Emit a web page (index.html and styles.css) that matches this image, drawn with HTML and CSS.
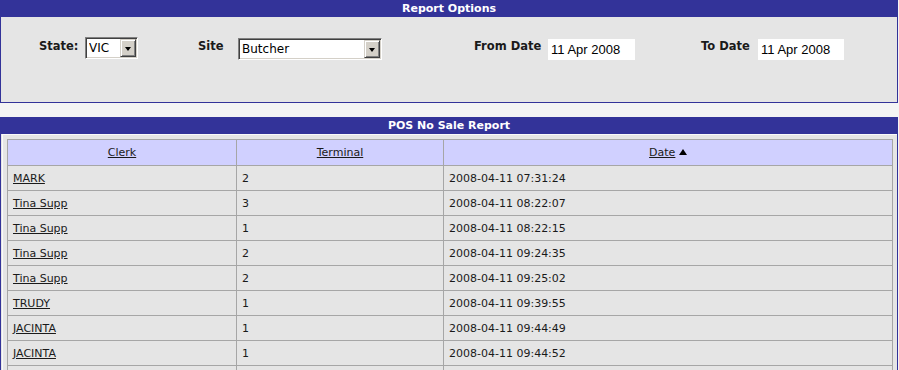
FILE: index.html
```html
<!DOCTYPE html>
<html lang="en">
<head>
  <meta charset="UTF-8" />
  <title>POS No Sale Report</title>
  <link rel="stylesheet" href="styles.css">
</head>
<body>
  <div class="panel">
    <div class="panel-title">Report Options</div>
    <div class="panel-body options">
      <form class="filtros">
        <label class="rotulo" for="state">State:</label>
        <span class="combo combo-state">
          <select id="state"><option>VIC</option><option>NSW</option><option>QLD</option></select>
          <span class="seta"></span>
        </span>
        <label class="rotulo" for="site">Site</label>
        <span class="combo combo-site">
          <select id="site"><option>Butcher</option><option>Bakery</option></select>
          <span class="seta"></span>
        </span>
        <label class="rotulo" for="from">From Date</label>
        <input class="data" id="from" type="text" value="11 Apr 2008">
        <label class="rotulo" for="to">To Date</label>
        <input class="data" id="to" type="text" value="11 Apr 2008">
      </form>
    </div>
  </div>

  <div class="panel">
    <div class="panel-title">POS No Sale Report</div>
    <div class="panel-body">
      <div class="grade">
        <table>
          <thead>
            <tr>
              <th class="col-clerk"><a href="#">Clerk</a></th>
              <th class="col-term"><a href="#">Terminal</a></th>
              <th><a href="#">Date</a> <span class="ordem"></span></th>
            </tr>
          </thead>
          <tbody>
            <tr><td><a href="#">MARK</a></td><td>2</td><td>2008-04-11 07:31:24</td></tr>
            <tr><td><a href="#">Tina Supp</a></td><td>3</td><td>2008-04-11 08:22:07</td></tr>
            <tr><td><a href="#">Tina Supp</a></td><td>1</td><td>2008-04-11 08:22:15</td></tr>
            <tr><td><a href="#">Tina Supp</a></td><td>2</td><td>2008-04-11 09:24:35</td></tr>
            <tr><td><a href="#">Tina Supp</a></td><td>2</td><td>2008-04-11 09:25:02</td></tr>
            <tr><td><a href="#">TRUDY</a></td><td>1</td><td>2008-04-11 09:39:55</td></tr>
            <tr><td><a href="#">JACINTA</a></td><td>1</td><td>2008-04-11 09:44:49</td></tr>
            <tr><td><a href="#">JACINTA</a></td><td>1</td><td>2008-04-11 09:44:52</td></tr>
            <tr><td><a href="#">JACINTA</a></td><td>1</td><td>2008-04-11 09:51:10</td></tr>
          </tbody>
        </table>
      </div>
    </div>
  </div>
</body>
</html>
```

FILE: styles.css
```css
html, body {
  margin: 0;
  background-color: #f4f4f4;
  font-family: "DejaVu Sans", Verdana, Tahoma, sans-serif;
  color: #1a1a1a;
}

body {
  overflow: hidden;
}

.panel {
  margin: 0 1px 14px 0;
}

.panel-title {
  height: 17px;
  line-height: 17px;
  background-color: #333399;
  color: #fff;
  font-size: 11px;
  font-weight: bold;
  text-align: center;
}

.panel-body {
  background-color: #e5e5e5;
  border: 1px solid #333399;
  border-top: none;
}

.options {
  height: 85px;
}

.filtros {
  display: grid;
  grid-template-columns: 46px 113px 40px 236px 74px 153px 57px auto;
  align-items: start;
  padding: 20px 0 0 38px;
}

.rotulo {
  font-size: 11.5px;
  font-weight: bold;
  line-height: 14px;
  margin-top: 2px;
}

/* caixa de selecao estilo classico */
.combo {
  display: flex;
  box-sizing: border-box;
  height: 22px;
  background-color: #fff;
  border: 1px solid;
  border-color: #808080 #ffffff #ffffff #808080;
  box-shadow: inset 1px 1px 0 #404040, inset -1px -1px 0 #d4d0c8;
  padding: 1px;
}

.combo-state {
  width: 53px;
}

.combo-site {
  width: 144px;
  margin-top: 1px;
}

.combo select {
  flex: 1;
  min-width: 0;
  appearance: none;
  -webkit-appearance: none;
  border: none;
  outline: none;
  background: transparent;
  font-family: "DejaVu Sans", Verdana, Tahoma, sans-serif;
  font-size: 12px;
  color: #000;
  padding: 0 0 0 2px;
  margin: 0;
}

.seta {
  width: 16px;
  box-sizing: border-box;
  background-color: #d4d0c8;
  border: 1px solid;
  border-color: #d4d0c8 #404040 #404040 #d4d0c8;
  box-shadow: inset 1px 1px 0 #fff, inset -1px -1px 0 #808080;
  display: flex;
  align-items: center;
  justify-content: center;
}

.seta::after {
  content: "";
  border-left: 3.5px solid transparent;
  border-right: 3.5px solid transparent;
  border-top: 4px solid #000;
  margin-top: 1px;
}

.data {
  box-sizing: border-box;
  width: 87px;
  height: 21px;
  margin-top: 2px;
  border: none;
  background-color: #fff;
  padding: 0 0 0 3px;
  font-family: "Liberation Sans", Arial, sans-serif;
  font-size: 13px;
  color: #000;
}

#to {
  width: 86px;
}

.grade {
  margin-left: 1px;
  border-left: 1px solid #fafafa;
  border-top: 1px solid #fafafa;
  padding: 4px 4px 0 4px;
}

table {
  width: 100%;
  border-collapse: collapse;
  table-layout: fixed;
  font-size: 11px;
}

th, td {
  height: 24px;
  padding: 0 5px;
  border: 1px solid #a6a6a6;
  text-align: left;
}

th {
  height: 25px;
  background-color: #d0d0ff;
  font-weight: normal;
  text-align: center;
}

.col-clerk {
  width: 229px;
  box-sizing: border-box;
}

.col-term {
  width: 207px;
  box-sizing: border-box;
}

a {
  color: #1a1a1a;
}

.ordem {
  display: inline-block;
  border-left: 4px solid transparent;
  border-right: 4px solid transparent;
  border-bottom: 6px solid #000;
  vertical-align: 1px;
}
```
